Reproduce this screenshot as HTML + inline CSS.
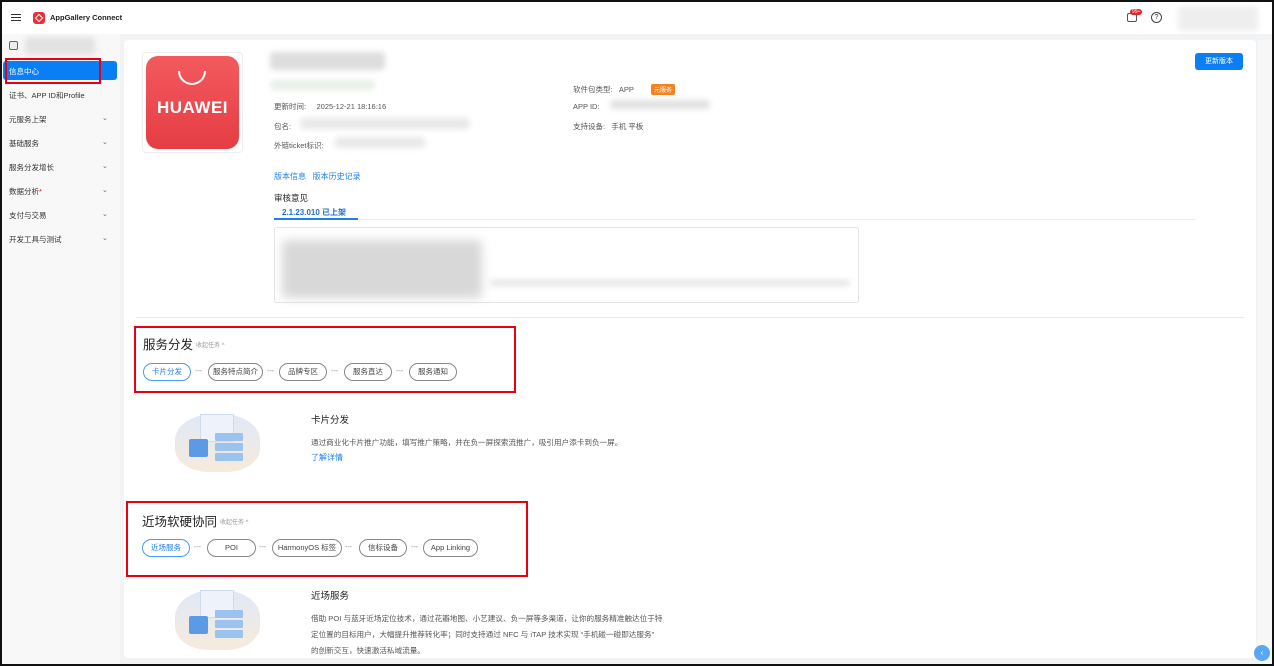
<!DOCTYPE html>
<html><head><meta charset="utf-8"><style>
*{margin:0;padding:0;box-sizing:border-box}
body{width:1274px;height:666px;overflow:hidden;font-family:"Liberation Sans","Noto Sans CJK SC",sans-serif;background:#f1f3f5;position:relative;color:#333;font-size:8px}
.a{position:absolute}
.frame{position:absolute;left:0;top:0;width:1274px;height:666px;border:2px solid #111;pointer-events:none;z-index:9}
.blur{position:absolute;background:#ddd;filter:blur(3px);border-radius:4px}
.nav{position:absolute;left:9px;font-size:7.5px;color:#333}
.chev{position:absolute;left:102px;font-size:7px;color:#666}
.pill{position:absolute;height:18px;border:1px solid #888;border-radius:10px;font-size:7.5px;color:#444;text-align:center;line-height:16px}
.pill.on{border-color:#4a9af5;color:#1f7ff0}
.dash{position:absolute;font-size:7px;color:#888;line-height:18px}
.lbl{color:#555;font-size:7.5px}
.red{position:absolute;border:2px solid #e60012}
</style></head><body>
<div class="frame"></div>
<!-- top bar -->
<div class="a" style="left:0;top:0;width:1274px;height:34px;background:#fff"></div>
<div class="a" style="left:11px;top:14px;width:10px;height:1.3px;background:#333;box-shadow:0 3px 0 #333,0 6px 0 #333"></div>
<div class="a" style="left:33px;top:12px;width:12px;height:12px;background:#e8303c;border-radius:3px"></div>
<div class="a" style="left:36px;top:15px;width:6px;height:6px;border:1.5px solid #fff;transform:rotate(45deg)"></div>
<div class="a" style="left:50px;top:13px;font-size:7.5px;font-weight:bold;color:#222">AppGallery Connect</div>
<div class="a" style="left:1127px;top:13px;width:10px;height:9px;border:1.2px solid #555;border-radius:2px"></div>
<div class="a" style="left:1130px;top:9px;background:#e8202c;color:#fff;font-size:5px;border-radius:4px;padding:0 2px">99+</div>
<div class="a" style="left:1151px;top:12px;width:11px;height:11px;border:1.2px solid #444;border-radius:50%;font-size:7px;text-align:center;line-height:9px">?</div>
<div class="blur" style="left:1178px;top:6px;width:80px;height:25px;background:#eee"></div>
<!-- sidebar -->
<div class="a" style="left:0;top:34px;width:120px;height:632px;background:#f8f8f8"></div>
<div class="a" style="left:9px;top:41px;width:9px;height:9px;border:1px solid #666;border-radius:2px;background:#eee"></div>
<div class="blur" style="left:25px;top:37px;width:70px;height:18px;background:#e2e2e2"></div>
<div class="a" style="left:3px;top:61px;width:114px;height:19px;background:#0a7ef5;border-radius:3px"></div>
<div class="red" style="left:5px;top:58px;width:96px;height:26px"></div>
<div class="nav" style="top:66px;color:#fff">信息中心</div>
<div class="nav" style="top:90px">证书、APP ID和Profile</div>
<div class="nav" style="top:114px">元服务上架</div><div class="chev" style="top:114px">⌄</div>
<div class="nav" style="top:138px">基础服务</div><div class="chev" style="top:138px">⌄</div>
<div class="nav" style="top:162px">服务分发增长</div><div class="chev" style="top:162px">⌄</div>
<div class="nav" style="top:186px">数据分析<span style="color:#e60012">*</span></div><div class="chev" style="top:186px">⌄</div>
<div class="nav" style="top:210px">支付与交易</div><div class="chev" style="top:210px">⌄</div>
<div class="nav" style="top:234px">开发工具与测试</div><div class="chev" style="top:234px">⌄</div>
<!-- main card -->
<div class="a" style="left:124px;top:40px;width:1132px;height:618px;background:#fff;border-radius:4px"></div>
<div class="a" style="left:1258px;top:40px;width:14px;height:626px;background:#f7f7f7"></div>
<div class="a" style="left:1254px;top:645px;width:16px;height:16px;border-radius:50%;background:#5aa7f5;color:#fff;font-size:8px;text-align:center;line-height:16px">‹</div>
<!-- app icon -->
<div class="a" style="left:142px;top:52px;width:101px;height:101px;border:1px solid #eee;border-radius:4px;background:#fff"></div>
<div class="a" style="left:146px;top:56px;width:93px;height:93px;border-radius:12px;background:linear-gradient(#f25a5e,#e53d44)"></div>
<div class="a" style="left:178px;top:71px;width:28px;height:14px;border:2px solid #fff;border-top:none;border-radius:0 0 14px 14px"></div>
<div class="a" style="left:146px;top:98px;width:93px;text-align:center;color:#fff;font-size:17px;font-weight:bold;letter-spacing:0.5px">HUAWEI</div>
<!-- info -->
<div class="blur" style="left:270px;top:52px;width:115px;height:18px"></div>
<div class="blur" style="left:270px;top:80px;width:105px;height:10px;background:#e8efe8"></div>
<div class="a lbl" style="left:274px;top:101px">更新时间:&nbsp;&nbsp;&nbsp;&nbsp;&nbsp;2025-12-21 18:16:16</div>
<div class="a lbl" style="left:274px;top:121px">包名:</div>
<div class="blur" style="left:300px;top:118px;width:170px;height:11px;background:#e8e8e8"></div>
<div class="a lbl" style="left:274px;top:140px">外链ticket标识:</div>
<div class="blur" style="left:335px;top:137px;width:90px;height:11px;background:#e8e8e8"></div>
<div class="a lbl" style="left:573px;top:84px">软件包类型:&nbsp;&nbsp;&nbsp;APP</div>
<div class="a" style="left:651px;top:84px;background:#f5811f;color:#fff;font-size:6px;padding:1px 3px;border-radius:2px">元服务</div>
<div class="a lbl" style="left:573px;top:102px">APP ID:</div>
<div class="blur" style="left:610px;top:100px;width:100px;height:9px;background:#e0e0e0"></div>
<div class="a lbl" style="left:573px;top:121px">支持设备:&nbsp;&nbsp;&nbsp;手机 平板</div>
<div class="a" style="left:1195px;top:53px;width:48px;height:17px;background:#0a7ef5;border-radius:3px;color:#fff;font-size:7px;text-align:center;line-height:17px">更新版本</div>
<div class="a" style="left:274px;top:171px;font-size:8px;color:#1f7ff0">版本信息&nbsp;&nbsp;&nbsp;版本历史记录</div>
<div class="a" style="left:274px;top:192px;font-size:8.5px;color:#222">审核意见</div>
<div class="a" style="left:282px;top:207px;font-size:8px;color:#1f6fd8;font-weight:bold">2.1.23.010 已上架</div>
<div class="a" style="left:274px;top:219px;width:922px;height:1px;background:#eee"></div>
<div class="a" style="left:274px;top:218px;width:84px;height:2px;background:#1f7ff0"></div>
<div class="a" style="left:274px;top:227px;width:585px;height:76px;border:1px solid #e4e4e4;border-radius:3px"></div>
<div class="blur" style="left:282px;top:240px;width:200px;height:58px;background:#d8d8d8;filter:blur(5px)"></div>
<div class="blur" style="left:490px;top:280px;width:360px;height:6px;background:#e4e4e4"></div>
<div class="a" style="left:136px;top:317px;width:1108px;height:1px;background:#e8e8e8"></div>
<!-- 服务分发 -->
<div class="red" style="left:134px;top:326px;width:382px;height:67px"></div>
<div class="a" style="left:143px;top:334px;font-size:12.5px;color:#222">服务分发</div>
<div class="a" style="left:196px;top:340px;font-size:6px;color:#999">收起任务 ^</div>
<div class="pill on" style="left:143px;top:363px;width:48px">卡片分发</div>
<div class="dash" style="left:195px;top:363px">---</div>
<div class="pill" style="left:208px;top:363px;width:55px">服务特点简介</div>
<div class="dash" style="left:267px;top:363px">---</div>
<div class="pill" style="left:279px;top:363px;width:48px">品牌专区</div>
<div class="dash" style="left:331px;top:363px">---</div>
<div class="pill" style="left:344px;top:363px;width:48px">服务直达</div>
<div class="dash" style="left:396px;top:363px">---</div>
<div class="pill" style="left:409px;top:363px;width:48px">服务通知</div>
<!-- illustration 1 -->
<div class="a" style="left:175px;top:414px;width:85px;height:58px;border-radius:45% 45% 40% 40%;background:linear-gradient(#dfe9f7,#f7eadb)"></div>
<div class="a" style="left:200px;top:414px;width:34px;height:28px;background:#eef3fb;border:1px solid #cfdcef"></div>
<div class="a" style="left:189px;top:439px;width:19px;height:18px;background:#5b9be6;border-radius:2px"></div>
<div class="a" style="left:215px;top:433px;width:28px;height:8px;background:#9cc3f0;border-radius:1px;box-shadow:0 10px 0 #9cc3f0,0 20px 0 #9cc3f0"></div>
<div class="a" style="left:311px;top:412px;font-size:9.5px;color:#222">卡片分发</div>
<div class="a" style="left:311px;top:437px;font-size:7.6px;color:#555;white-space:nowrap">通过商业化卡片推广功能，填写推广策略，并在负一屏探索流推广，吸引用户添卡到负一屏。</div>
<div class="a" style="left:311px;top:452px;font-size:8px;color:#1f7ff0">了解详情</div>
<!-- 近场软硬协同 -->
<div class="red" style="left:126px;top:501px;width:402px;height:76px"></div>
<div class="a" style="left:142px;top:511px;font-size:12.5px;color:#222">近场软硬协同</div>
<div class="a" style="left:220px;top:517px;font-size:6px;color:#999">收起任务 ^</div>
<div class="pill on" style="left:142px;top:539px;width:48px">近场服务</div>
<div class="dash" style="left:194px;top:539px">---</div>
<div class="pill" style="left:207px;top:539px;width:49px">POI</div>
<div class="dash" style="left:259px;top:539px">---</div>
<div class="pill" style="left:272px;top:539px;width:70px">HarmonyOS 标签</div>
<div class="dash" style="left:345px;top:539px">---</div>
<div class="pill" style="left:359px;top:539px;width:48px">信标设备</div>
<div class="dash" style="left:411px;top:539px">---</div>
<div class="pill" style="left:423px;top:539px;width:55px">App Linking</div>
<!-- illustration 2 -->
<div class="a" style="left:175px;top:590px;width:85px;height:60px;border-radius:45% 45% 40% 40%;background:linear-gradient(#dfe9f7,#f7eadb)"></div>
<div class="a" style="left:200px;top:590px;width:34px;height:28px;background:#eef3fb;border:1px solid #cfdcef"></div>
<div class="a" style="left:189px;top:616px;width:19px;height:18px;background:#5b9be6;border-radius:2px"></div>
<div class="a" style="left:215px;top:610px;width:28px;height:8px;background:#9cc3f0;border-radius:1px;box-shadow:0 10px 0 #9cc3f0,0 20px 0 #9cc3f0"></div>
<div class="a" style="left:311px;top:588px;font-size:9.5px;color:#222">近场服务</div>
<div class="a" style="left:311px;top:611px;font-size:7.6px;color:#555;line-height:16px;width:352px">借助 POI 与蓝牙近场定位技术，通过花瓣地图、小艺建议、负一屏等多渠道，让你的服务精准触达位于特定位置的目标用户，大幅提升推荐转化率；同时支持通过 NFC 与 iTAP 技术实现 “手机碰一碰即达服务” 的创新交互，快速激活私域流量。</div>
</body></html>
